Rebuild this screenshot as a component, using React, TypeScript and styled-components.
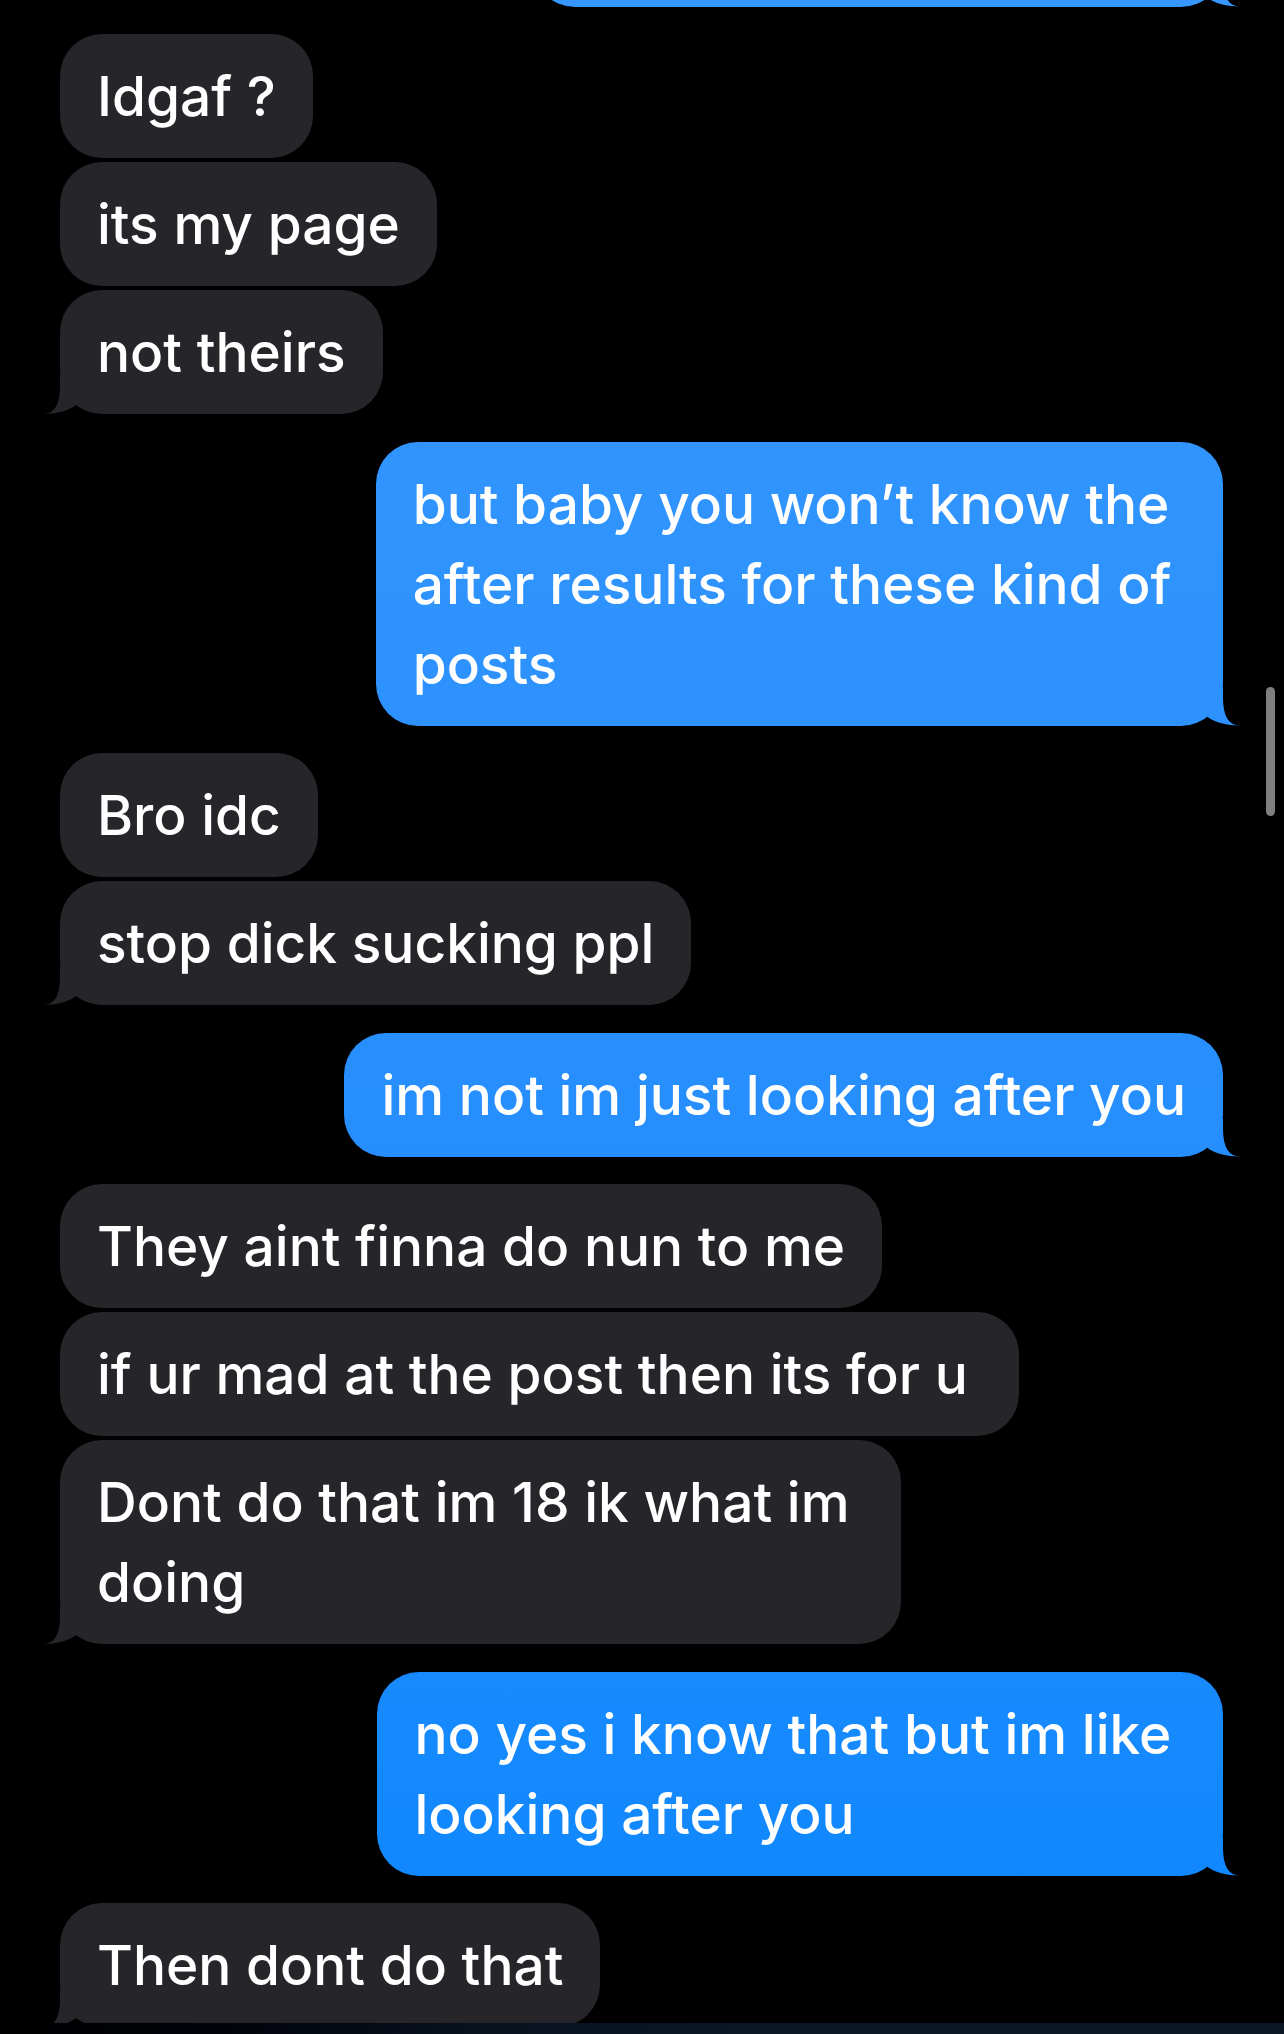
import React from "react";
import styled, { createGlobalStyle, css } from "styled-components";

const GlobalStyle = createGlobalStyle`
  html, body {
    margin: 0;
    padding: 0;
    background: #000;
  }
  body {
    font-family: "Inter", "Roboto", "Liberation Sans", sans-serif;
    -webkit-font-smoothing: antialiased;
  }
`;

const BLUE_GRADIENT = `linear-gradient(180deg, #3698ff 0px, #2f93fe 580px, #278efe 1100px, #1489fe 1780px, #0d86fe 2034px)`;

const Screen = styled.div`
  position: relative;
  width: 1284px;
  height: 2034px;
  background: #000;
  display: flex;
  flex-direction: column;
  overflow: hidden;
`;

const Thread = styled.div`
  flex: 1;
  overflow: hidden;
  padding: 0 61px 0 60px;
`;

const Content = styled.div`
  margin-top: -117.5px;
  display: flex;
  flex-direction: column;
  gap: 27.5px;
`;

const Group = styled.div<{ $out?: boolean }>`
  display: flex;
  flex-direction: column;
  gap: 4px;
  align-items: ${(p) => (p.$out ? "flex-end" : "flex-start")};
`;

const tailRight = `path("M 24 2 L 24 12 Q 24 40 41 40 Q 17 40 4 28 L 4 2 Z")`;
const tailLeft = `path("M 16 2 L 16 12 Q 16 40 -1 40 Q 23 40 36 28 L 36 2 Z")`;

const Bubble = styled.div<{ $out?: boolean; $tail?: boolean; $width?: number }>`
  position: relative;
  box-sizing: border-box;
  padding: 22px 37px 22px 37px;
  border-radius: 42px;
  color: #fff;
  font-size: 55px;
  line-height: 80px;
  font-weight: 500;
  white-space: pre;
  ${(p) => (p.$width ? `width: ${p.$width}px;` : "")}
  ${(p) =>
    p.$out
      ? css`
          background: ${BLUE_GRADIENT};
          background-attachment: fixed;
        `
      : css`
          background: #262529;
        `}

  ${(p) =>
    p.$tail &&
    css`
      &::after {
        content: "";
        position: absolute;
        bottom: 0;
        width: 40px;
        height: 40px;
        background: inherit;
        background-attachment: ${p.$out ? "fixed" : "scroll"};
        ${p.$out
          ? css`
              right: -16px;
              clip-path: ${tailRight};
            `
          : css`
              left: -16px;
              clip-path: ${tailLeft};
            `}
      }
    `}
`;

const BottomBar = styled.div`
  height: 11px;
  flex: none;
  background: linear-gradient(90deg, #000 0%, #01030a 18%, #08121f 38%, #0b1727 60%, #0c1828 100%);
`;

const ScrollIndicator = styled.div`
  position: absolute;
  left: 1266px;
  top: 687px;
  width: 9px;
  height: 129px;
  border-radius: 5px;
  background: #7f7f7f;
`;

type Msg = { text: string; width?: number };
type GroupData = { out: boolean; msgs: Msg[] };

const thread: GroupData[] = [
  { out: true, msgs: [{ text: "\u00a0", width: 690 }] },
  { out: false, msgs: [{ text: "Idgaf ?" }, { text: "its my page" }, { text: "not theirs" }] },
  {
    out: true,
    msgs: [
      {
        text: "but baby you won\u2019t know the \nafter results for these kind of \nposts",
      },
    ],
  },
  { out: false, msgs: [{ text: "Bro idc" }, { text: "stop dick sucking ppl" }] },
  { out: true, msgs: [{ text: "im not im just looking after you" }] },
  {
    out: false,
    msgs: [
      { text: "They aint finna do nun to me" },
      { text: "if ur mad at the post then its for u " },
      { text: "Dont do that im 18 ik what im \ndoing" },
    ],
  },
  { out: true, msgs: [{ text: "no yes i know that but im like \nlooking after you" }] },
  { out: false, msgs: [{ text: "Then dont do that" }] },
];

export default function App() {
  return (
    <>
      <GlobalStyle />
      <Screen>
        <Thread>
          <Content>
            {thread.map((g, gi) => (
              <Group key={gi} $out={g.out}>
                {g.msgs.map((m, mi) => (
                  <Bubble
                    key={mi}
                    $out={g.out}
                    $tail={mi === g.msgs.length - 1}
                    $width={m.width}
                  >
                    {m.text}
                  </Bubble>
                ))}
              </Group>
            ))}
          </Content>
        </Thread>
        <BottomBar />
        <ScrollIndicator />
      </Screen>
    </>
  );
}
